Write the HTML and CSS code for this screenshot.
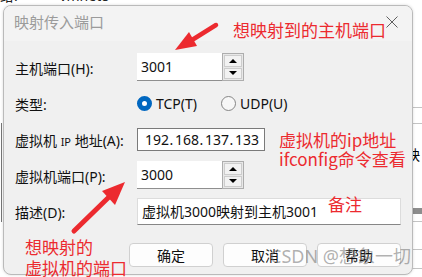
FILE: index.html
```html
<!DOCTYPE html>
<html lang="zh-CN">
<head>
    <meta charset="UTF-8">
    <title>映射传入端口</title>
    <link rel="stylesheet" href="styles.css">
</head>
<body>

<div class="back-top">
    <span class="back-label">给:</span>
    <span class="back-name">vmnet8</span>
</div>
<div class="back-left"></div>
<div class="back-side">
    <div class="back-line first"></div>
    <div class="back-line second"></div>
    <div class="back-text">映</div>
    <div class="back-bar"></div>
    <div class="back-line third"></div>
    <div class="back-line fourth"></div>
    <div class="back-line fifth"></div>
</div>

<div class="dialog">
    <div class="titlebar">
        <span class="title">映射传入端口</span>
        <svg class="close" width="12" height="12" viewBox="0 0 12 12">
            <path d="M0.5 0.5 L11.5 11.5 M11.5 0.5 L0.5 11.5" stroke="#5f5f5f" stroke-width="1" fill="none"/>
        </svg>
    </div>

    <div class="form">
        <div class="lbl">主机端口(H):</div>
        <div class="ctl">
            <div class="field">3001</div>
            <div class="spin">
                <span class="spin-btn"><i class="tri up"></i></span>
                <span class="spin-btn"><i class="tri down"></i></span>
            </div>
        </div>

        <div class="lbl">类型:</div>
        <div class="ctl">
            <div class="radio">
                <span class="dot checked"></span>
                <span>TCP(T)</span>
            </div>
            <div class="radio">
                <span class="dot"></span>
                <span>UDP(U)</span>
            </div>
        </div>

        <div class="lbl">虚拟机 <span class="small">IP</span> 地址(A):</div>
        <div class="ctl">
            <div class="ip-field">
                <span class="ip-part">192</span><span class="ip-dot">.</span>
                <span class="ip-part">168</span><span class="ip-dot">.</span>
                <span class="ip-part">137</span><span class="ip-dot">.</span>
                <span class="ip-part">133</span>
            </div>
        </div>

        <div class="lbl">虚拟机端口(P):</div>
        <div class="ctl">
            <div class="field">3000</div>
            <div class="spin">
                <span class="spin-btn"><i class="tri up"></i></span>
                <span class="spin-btn"><i class="tri down"></i></span>
            </div>
        </div>

        <div class="lbl">描述(D):</div>
        <div class="ctl">
            <div class="desc-field">虚拟机3000映射到主机3001</div>
        </div>
    </div>

    <div class="buttons">
        <div class="btn">确定</div>
        <div class="btn">取消</div>
        <div class="btn">帮助</div>
    </div>
</div>

<svg class="arrows" width="422" height="277" viewBox="0 0 422 277">
    <line x1="216" y1="25" x2="192" y2="40" stroke="#ec2a2f" stroke-width="4.5" stroke-linecap="round"/>
    <polygon points="175,50 197,46 189,32" fill="#ec2a2f"/>
    <line x1="74" y1="231" x2="109" y2="197" stroke="#ec2a2f" stroke-width="5" stroke-linecap="round"/>
    <polygon points="125,182 115,205 102,191" fill="#ec2a2f"/>
</svg>

<div class="note note-host">想映射到的主机端口</div>
<div class="note note-ip">虚拟机的ip地址<br>ifconfig命令查看</div>
<div class="note note-memo">备注</div>
<div class="note note-vm">想映射的<br>虚拟机的端口</div>

<div class="watermark">CSDN @想象一切</div>

</body>
</html>
```

FILE: styles.css
```css
* {
    margin: 0;
    padding: 0;
    box-sizing: border-box;
}

body {
    position: relative;
    width: 422px;
    height: 277px;
    overflow: hidden;
    background: #fff;
    font-family: "Noto Sans", "Noto Sans CJK SC", sans-serif;
    color: #111;
}

/* window behind the dialog */
.back-top {
    position: absolute;
    top: -11px;
    left: 0;
    font-size: 14px;
    line-height: 14px;
    color: #222;
    white-space: nowrap;
}

.back-name {
    margin-left: 38px;
}

.back-left {
    position: absolute;
    left: 1px;
    top: 123px;
    width: 1px;
    height: 99px;
    background: #777;
}

.back-side {
    position: absolute;
    left: 406px;
    top: 0;
    width: 16px;
    height: 277px;
    display: flex;
    flex-direction: column;
    padding-top: 107px;
}

.back-line {
    height: 1px;
    background: #c4c4c4;
}

.back-line.second {
    margin-top: 15px;
}

.back-text {
    margin-top: 23px;
    font-family: "Noto Sans CJK SC", sans-serif;
    font-size: 14px;
    line-height: 14px;
    color: #000;
}

.back-bar {
    margin-top: 47px;
    height: 6px;
    background: #8d8d8d;
}

.back-line.third {
    margin-top: 7px;
}

.back-line.fourth {
    margin-top: 27px;
}

.back-line.fifth {
    margin-top: 18px;
}

/* dialog */
.dialog {
    position: absolute;
    left: 3px;
    top: 5px;
    width: 410px;
    height: 270px;
    background: #f0f0f0;
    border: 1px solid #bababa;
    border-radius: 8px;
    overflow: hidden;
    box-shadow: 0 0 3px rgba(0, 0, 0, 0.15);
}

.titlebar {
    height: 35px;
    display: flex;
    align-items: center;
    justify-content: space-between;
    padding: 0 14px 4px 10px;
    background: #f3f3f3;
}

.title {
    font-family: "Noto Sans CJK SC", sans-serif;
    font-size: 15px;
    color: #9b9b9b;
}

.form {
    display: grid;
    grid-template-columns: 122px 1fr;
    grid-auto-rows: 36px;
    align-items: center;
    padding: 8px 11px 0;
}

.lbl {
    font-size: 14px;
    white-space: nowrap;
    padding-top: 2px;
}

.lbl .small {
    font-size: 11px;
}

.ctl {
    display: flex;
    align-items: center;
}

.field {
    width: 85px;
    height: 28px;
    padding-left: 4px;
    background: #fff;
    border-bottom: 1px solid #8f8f8f;
    font-size: 14px;
    line-height: 27px;
}

.spin {
    width: 22px;
    height: 28px;
    display: flex;
    flex-direction: column;
    gap: 1px;
    padding: 1px;
    border: 1px solid #adadad;
    background: #e8e8e8;
}

.spin-btn {
    flex: 1;
    display: flex;
    align-items: center;
    justify-content: center;
    border: 1px solid #cdcdcd;
    background: #f2f2f2;
}

.tri {
    width: 0;
    height: 0;
    border-left: 4px solid transparent;
    border-right: 4px solid transparent;
}

.tri.up {
    border-bottom: 4px solid #000;
}

.tri.down {
    border-top: 4px solid #000;
}

.radio {
    display: flex;
    align-items: center;
    gap: 4px;
    font-size: 14px;
}

.radio:first-child {
    width: 84px;
}

.dot {
    width: 15px;
    height: 15px;
    border-radius: 50%;
    border: 1px solid #858585;
    background: #f7f7f7;
}

.dot.checked {
    border: 5px solid #0067c0;
    background: #fff;
}

.ip-field {
    width: 128px;
    height: 23px;
    display: flex;
    align-items: center;
    padding-left: 7px;
    background: #fff;
    border: 1px solid #7a7a7a;
    font-size: 14px;
}

.ip-part {
    flex: none;
    width: 23px;
}

.ip-dot {
    flex: none;
    width: 7px;
    text-align: center;
}

.desc-field {
    width: 264px;
    height: 27px;
    padding-left: 4px;
    background: #fff;
    border: 1px solid #dcdcdc;
    border-bottom-color: #868686;
    font-size: 14px;
    line-height: 25px;
}

.buttons {
    display: flex;
    justify-content: flex-end;
    gap: 10px;
    padding: 14px 11px 0;
}

.btn {
    width: 84px;
    height: 24px;
    display: flex;
    align-items: center;
    justify-content: center;
    background: #fdfdfd;
    border: 1px solid #d0d0d0;
    border-radius: 4px;
    font-family: "Noto Sans CJK SC", sans-serif;
    font-size: 14px;
}

/* annotations drawn over the screenshot */
.arrows {
    position: absolute;
    top: 0;
    left: 0;
}

.note {
    position: absolute;
    font-family: "Noto Sans CJK SC", sans-serif;
    font-size: 17px;
    line-height: 17px;
    color: #ec2a2f;
    white-space: nowrap;
}

.note-host {
    left: 233px;
    top: 21px;
}

.note-ip {
    left: 279px;
    top: 130px;
    line-height: 19px;
}

.note-memo {
    left: 328px;
    top: 195px;
}

.note-vm {
    left: 25px;
    top: 236px;
    line-height: 21px;
}

.watermark {
    position: absolute;
    left: 270px;
    top: 247px;
    font-size: 18px;
    line-height: 18px;
    color: rgba(110, 110, 110, 0.55);
    white-space: nowrap;
}
```
